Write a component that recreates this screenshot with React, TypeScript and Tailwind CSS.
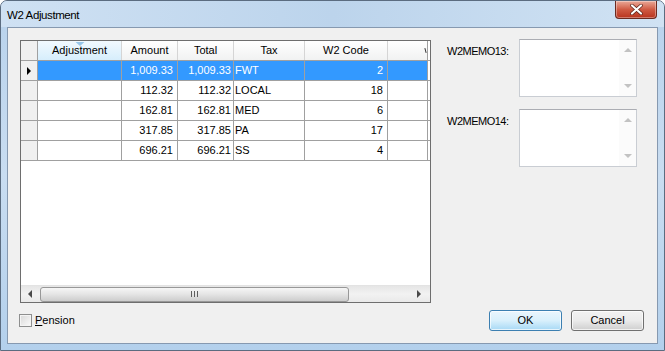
import React from 'react';

type Row = { amount: string; total: string; tax: string; code: string };

const rows: Row[] = [
    { amount: '1,009.33', total: '1,009.33', tax: 'FWT', code: '2' },
    { amount: '112.32', total: '112.32', tax: 'LOCAL', code: '18' },
    { amount: '162.81', total: '162.81', tax: 'MED', code: '6' },
    { amount: '317.85', total: '317.85', tax: 'PA', code: '17' },
    { amount: '696.21', total: '696.21', tax: 'SS', code: '4' },
];

const font = { fontFamily: '"Liberation Sans", Arial, sans-serif' };

const Arrow = ({ dir, color = '#4d4d4d' }: { dir: 'up' | 'down' | 'left' | 'right'; color?: string }) => {
    const pts = {
        up: '0,4 4,0 8,4',
        down: '0,0 4,4 8,0',
        left: '4,0 0,4 4,8',
        right: '0,0 4,4 0,8',
    }[dir];
    const vertical = dir === 'up' || dir === 'down';
    return (
        <svg width={vertical ? 8 : 4} height={vertical ? 4 : 8} viewBox={vertical ? '0 0 8 4' : '0 0 4 8'}>
            <polygon points={pts} fill={color} />
        </svg>
    );
};

const MemoBox = () => (
    <div className="w-[118px] h-[58px] shrink-0 bg-white border border-[#c9cdd3] border-t-[#abadb3] flex justify-end">
        <div className="w-[17px] flex flex-col items-center justify-between py-[8px] bg-[#fbfbfb]">
            <Arrow dir="up" color="#c2c2c2" />
            <Arrow dir="down" color="#c2c2c2" />
        </div>
    </div>
);

const HeaderCell = ({ w, children, active }: { w: string; children?: React.ReactNode; active?: boolean }) => (
    <div
        className={`${w} h-full shrink-0 relative flex items-center justify-center border-r border-[#d5d5d5] ${
            active ? 'bg-gradient-to-b from-[#f2f9fe] to-[#d6eefc]' : 'bg-gradient-to-b from-white to-[#f1f2f2]'
        }`}
    >
        {active && (
            <div className="absolute top-[1px] left-1/2 -translate-x-1/2">
                <svg width="9" height="4" viewBox="0 0 9 4">
                    <polygon points="0,0 9,0 4.5,4" fill="#97c6ea" />
                </svg>
            </div>
        )}
        {children}
    </div>
);

export default function App() {
    return (
        <div
            className="w-[665px] h-[351px] flex flex-col rounded-t-[7px] border border-[#5b6c80] overflow-hidden bg-gradient-to-b from-[#b8d2ec] via-[#c9ddf1] to-[#b3d0ec] text-[11px] text-black"
            style={font}
        >
            {/* title bar */}
            <div className="h-[26px] shrink-0 flex justify-between pl-[6px] pr-[7px] bg-gradient-to-r from-[#cfe1f3] via-[#bcd4ec] to-[#d0e2f3]">
                <div className="pt-[6px] text-[11.5px] tracking-[-0.4px] text-black">W2 Adjustment</div>
                <div className="w-[42px] h-[18px] rounded-b-[4px] border border-t-0 border-[#6b2a20] bg-gradient-to-b from-[#e9a898] via-[#cf5a43] to-[#b8321c] flex items-center justify-center shadow-[inset_0_0_0_1px_rgba(255,255,255,0.35)]">
                    <svg width="13" height="11" viewBox="0 0 13 11">
                        <path d="M2 1.5 L11 9.5 M11 1.5 L2 9.5" stroke="#5a2218" strokeWidth="3.6" strokeLinecap="round" />
                        <path d="M2 1.5 L11 9.5 M11 1.5 L2 9.5" stroke="#ffffff" strokeWidth="2.2" strokeLinecap="round" />
                    </svg>
                </div>
            </div>

            {/* client area */}
            <div className="px-[6px] pb-[6px] flex-1 flex">
                <div className="flex-1 border border-[#8699b0] bg-[#f0f0f0] flex flex-col pl-[12px] pt-[12px] pr-[13px]">
                    <div className="flex">
                        {/* grid */}
                        <div className="w-[411px] h-[263px] shrink-0 border border-[#6e6e6e] bg-white flex flex-col">
                            {/* header */}
                            <div className="h-[20px] flex border-b border-[#a0a0a0] shrink-0">
                                <div className="w-[17px] h-full shrink-0 border-r border-[#a0a0a0] bg-[#f0f0f0]" />
                                <HeaderCell w="w-[84px]" active>Adjustment</HeaderCell>
                                <HeaderCell w="w-[56px]">Amount</HeaderCell>
                                <HeaderCell w="w-[56px]">Total</HeaderCell>
                                <HeaderCell w="w-[71px]">Tax</HeaderCell>
                                <HeaderCell w="w-[83px]">W2 Code</HeaderCell>
                                {/* partially scrolled-off column: only the edge of its caption shows */}
                                <div className="w-[40px] h-full shrink-0 bg-gradient-to-b from-white to-[#f1f2f2] border-r border-[#a0a0a0] flex items-start justify-end pr-[1px] pt-[7px]">
                                    <div className="w-[1px] h-[5px] bg-[#333] rotate-[-15deg]" />
                                </div>
                            </div>
                            {/* rows */}
                            {rows.map((r, i) => {
                                const sel = i === 0;
                                const cell = `h-full shrink-0 border-r border-[#a0a0a0] flex items-center ${sel ? 'bg-[#3399ff] text-white' : ''}`;
                                return (
                                    <div key={i} className="h-[20px] flex border-b border-[#a0a0a0] shrink-0">
                                        <div className="w-[17px] h-full shrink-0 border-r border-[#a0a0a0] bg-[#f0f0f0] flex items-center justify-center">
                                            {sel && <Arrow dir="right" color="#000" />}
                                        </div>
                                        <div className={`${cell} w-[84px]`} />
                                        <div className={`${cell} w-[56px] justify-end pr-[4px]`}>{r.amount}</div>
                                        <div className={`${cell} w-[56px] justify-end pr-[2px]`}>{r.total}</div>
                                        <div className={`${cell} w-[71px] pl-[1px]`}>{r.tax}</div>
                                        <div className={`${cell} w-[83px] justify-end pr-[4px]`}>{r.code}</div>
                                        <div className={`${cell} w-[40px]`} />
                                    </div>
                                );
                            })}
                            <div className="flex-1" />
                            {/* horizontal scrollbar */}
                            <div className="h-[17px] shrink-0 flex bg-gradient-to-b from-[#e6e6e6] via-[#f2f2f2] to-[#e9e9e9] border-t border-[#e3e3e3]">
                                <div className="w-[17px] flex items-center justify-center">
                                    <Arrow dir="left" color="#4a4a4a" />
                                </div>
                                <div className="w-[309px] h-[15px] my-auto ml-[2px] rounded-[3px] border border-[#989898] bg-gradient-to-b from-[#f6f6f6] via-[#e4e4e4] to-[#cdcdcd] flex items-center justify-center">
                                    <div className="flex gap-[2px]">
                                        <div className="w-[1px] h-[6px] bg-[#5e5e5e]" />
                                        <div className="w-[1px] h-[6px] bg-[#5e5e5e]" />
                                        <div className="w-[1px] h-[6px] bg-[#5e5e5e]" />
                                    </div>
                                </div>
                                <div className="flex-1" />
                                <div className="w-[17px] flex items-center justify-center mr-[3px]">
                                    <Arrow dir="right" color="#4a4a4a" />
                                </div>
                            </div>
                        </div>

                        {/* memos */}
                        <div className="ml-[16px] -mt-[1px] flex flex-col gap-[12px]">
                            <div className="flex">
                                <div className="w-[72px] shrink-0 pt-[4px] whitespace-nowrap tracking-[-0.5px]">W2MEMO13:</div>
                                <MemoBox />
                            </div>
                            <div className="flex">
                                <div className="w-[72px] shrink-0 pt-[4px] whitespace-nowrap tracking-[-0.5px]">W2MEMO14:</div>
                                <MemoBox />
                            </div>
                        </div>
                    </div>

                    {/* bottom row */}
                    <div className="mt-[7px] h-[21px] flex items-center">
                        <div className="-ml-[1px] w-[13px] h-[13px] border border-[#8e8f8f] bg-gradient-to-br from-[#d8d8d8] to-[#fbfbfb] shadow-[inset_0_0_0_1px_#f4f4f4]" />
                        <div className="ml-[3px]">
                            <span className="underline">P</span>ension
                        </div>
                        <div className="flex-1" />
                        <button className="w-[73px] h-[21px] rounded-[3px] border border-[#3c7fb1] bg-gradient-to-b from-[#eaf6fd] via-[#d9f0fc] to-[#a7d9f5] shadow-[inset_0_0_0_1px_rgba(255,255,255,0.7)] text-[11px]">
                            OK
                        </button>
                        <button className="ml-[9px] w-[73px] h-[21px] rounded-[3px] border border-[#707070] bg-gradient-to-b from-[#f2f2f2] via-[#ebebeb] to-[#cfcfcf] shadow-[inset_0_0_0_1px_rgba(255,255,255,0.7)] text-[11px]">
                            Cancel
                        </button>
                    </div>
                </div>
            </div>
        </div>
    );
}
